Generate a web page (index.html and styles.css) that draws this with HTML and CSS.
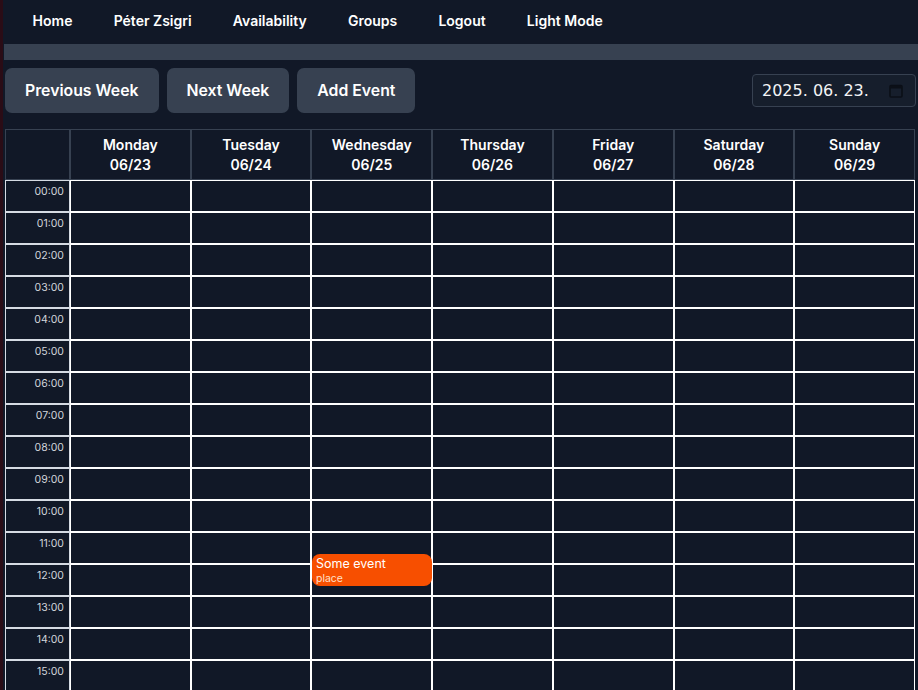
FILE: index.html
```html
<!DOCTYPE html>
<html lang="hu">
<head>
<meta charset="utf-8">
<title>Calendar</title>
<link rel="stylesheet" href="styles.css">
</head>
<body>
<div class="page">
  <nav class="nav">
    <a class="nav-link">Home</a>
    <a class="nav-link">Péter Zsigri</a>
    <a class="nav-link">Availability</a>
    <a class="nav-link">Groups</a>
    <a class="nav-link">Logout</a>
    <a class="nav-link">Light Mode</a>
  </nav>
  <div class="bar"></div>
  <div class="toolbar">
    <button class="btn">Previous Week</button>
    <button class="btn">Next Week</button>
    <button class="btn">Add Event</button>
    <div class="date-input">
      <span class="date-text">2025. 06. 23.</span>
      <svg class="cal-icon" width="14" height="14" viewBox="0 0 14 14">
        <rect x="1" y="1.5" width="12" height="11.5" rx="1" fill="none" stroke="#0b0f17" stroke-width="1.6"/>
        <rect x="1" y="1.5" width="12" height="3" fill="#0b0f17"/>
      </svg>
    </div>
  </div>
  <div class="cal-wrap">
    <table class="cal">
      <thead>
        <tr>
          <th class="corner"></th>
          <th>Monday<br>06/23</th>
          <th>Tuesday<br>06/24</th>
          <th>Wednesday<br>06/25</th>
          <th>Thursday<br>06/26</th>
          <th>Friday<br>06/27</th>
          <th>Saturday<br>06/28</th>
          <th>Sunday<br>06/29</th>
        </tr>
      </thead>
      <tbody>
        <tr><td class="time">00:00</td><td></td><td></td><td></td><td></td><td></td><td></td><td></td></tr>
        <tr><td class="time">01:00</td><td></td><td></td><td></td><td></td><td></td><td></td><td></td></tr>
        <tr><td class="time">02:00</td><td></td><td></td><td></td><td></td><td></td><td></td><td></td></tr>
        <tr><td class="time">03:00</td><td></td><td></td><td></td><td></td><td></td><td></td><td></td></tr>
        <tr><td class="time">04:00</td><td></td><td></td><td></td><td></td><td></td><td></td><td></td></tr>
        <tr><td class="time">05:00</td><td></td><td></td><td></td><td></td><td></td><td></td><td></td></tr>
        <tr><td class="time">06:00</td><td></td><td></td><td></td><td></td><td></td><td></td><td></td></tr>
        <tr><td class="time">07:00</td><td></td><td></td><td></td><td></td><td></td><td></td><td></td></tr>
        <tr><td class="time">08:00</td><td></td><td></td><td></td><td></td><td></td><td></td><td></td></tr>
        <tr><td class="time">09:00</td><td></td><td></td><td></td><td></td><td></td><td></td><td></td></tr>
        <tr><td class="time">10:00</td><td></td><td></td><td></td><td></td><td></td><td></td><td></td></tr>
        <tr><td class="time">11:00</td><td></td><td></td><td></td><td></td><td></td><td></td><td></td></tr>
        <tr><td class="time">12:00</td><td></td><td></td><td></td><td></td><td></td><td></td><td></td></tr>
        <tr><td class="time">13:00</td><td></td><td></td><td></td><td></td><td></td><td></td><td></td></tr>
        <tr><td class="time">14:00</td><td></td><td></td><td></td><td></td><td></td><td></td><td></td></tr>
        <tr><td class="time">15:00</td><td></td><td></td><td></td><td></td><td></td><td></td><td></td></tr>
      </tbody>
    </table>
    <div class="event">
      <div class="event-title">Some event</div>
      <div class="event-place">place</div>
    </div>
  </div>
</div>
</body>
</html>
```

FILE: styles.css
```css
html, body {
  margin: 0;
  padding: 0;
  background: #111827;
  overflow: hidden;
}
body {
  font-family: Inter, "Noto Sans", sans-serif;
  color: #ffffff;
  border-left: 3px solid #2a0c16;
  padding-left: 1px;
  min-height: 690px;
  box-sizing: border-box;
}
.page {
  display: flex;
  flex-direction: column;
}
.nav {
  height: 44px;
  display: flex;
  align-items: center;
  padding-left: 8px;
}
.nav-link {
  padding: 0 20.6px;
  font-size: 14px;
  font-weight: 600;
  color: #ffffff;
  line-height: 20px;
  margin-top: -2px;
}
.bar {
  height: 16px;
  background: #374151;
}
.toolbar {
  display: flex;
  align-items: center;
  gap: 8px;
  margin-top: 8px;
  padding-left: 1px;
  padding-right: 2px;
}
.btn {
  height: 45px;
  padding: 0 20px;
  border: none;
  border-radius: 7px;
  background: #374151;
  color: #ffffff;
  font-family: Inter, "Noto Sans", sans-serif;
  font-size: 15.8px;
  font-weight: 600;
}
.date-input {
  margin-left: auto;
  width: 164px;
  height: 33px;
  box-sizing: border-box;
  border: 1px solid #374151;
  border-radius: 4px;
  background: #161e2c;
  display: flex;
  align-items: center;
  padding: 0 12px 0 9px;
}
.date-text {
  font-family: "DejaVu Sans", sans-serif;
  font-size: 16px;
  color: #f3f4f6;
  flex: 1;
}
.cal-wrap {
  position: relative;
  margin-top: 16px;
  margin-left: 1px;
  width: 910px;
}
.cal {
  border-spacing: 0;
  width: 910px;
  table-layout: fixed;
}
.cal th {
  height: 49px;
  padding: 0;
  border: 1px solid #374151;
  font-size: 14px;
  font-weight: 600;
  line-height: 20px;
  color: #ffffff;
  text-align: center;
  vertical-align: middle;
}
.cal th.corner {
  width: 63px;
}
.cal td {
  height: 30px;
  padding: 0;
  border: 1px solid #ffffff;
}
.cal td.time {
  border-color: #d6dbe3;
  text-align: right;
  padding: 4px 5px 0 0;
  height: 26px;
  font-size: 10.5px;
  line-height: 14px;
  color: #d1d5db;
  vertical-align: top;
}
.event {
  position: absolute;
  left: 307px;
  top: 425px;
  width: 120px;
  height: 32px;
  box-sizing: border-box;
  background: #f74f00;
  border-radius: 8px;
  padding: 2px 4px;
  color: #ffffff;
}
.event-title {
  font-size: 12.5px;
  line-height: 15px;
}
.event-place {
  font-size: 10.5px;
  line-height: 14px;
  padding-top: 1px;
  color: #ffe0cc;
}
```
